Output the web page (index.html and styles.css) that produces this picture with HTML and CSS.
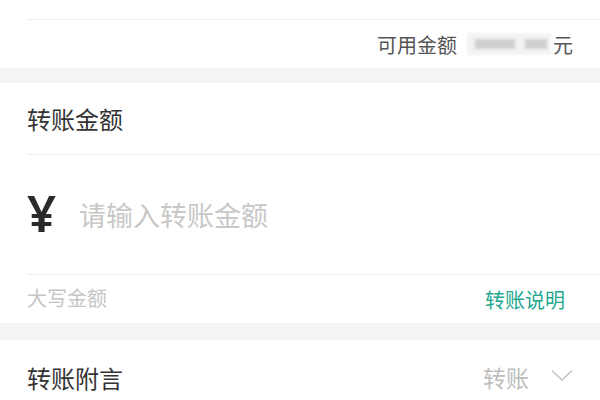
FILE: index.html
```html
<!DOCTYPE html>
<html lang="zh-CN">
<head>
<meta charset="utf-8">
<link rel="stylesheet" href="styles.css">
</head>
<body>
<div class="page">
  <section class="card">
    <div class="row top-row"></div>
    <div class="row balance-row">
      <span class="balance-label">可用金额</span>
      <span class="blur"><i class="b1"></i><i class="b2"></i></span>
      <span class="balance-unit">元</span>
    </div>
  </section>
  <div class="gap"></div>
  <section class="card">
    <div class="row title-row">转账金额</div>
    <div class="row amount-row">
      <span class="yen">¥</span>
      <span class="placeholder">请输入转账金额</span>
    </div>
    <div class="row caps-row">
      <span class="caps">大写金额</span>
      <span class="link">转账说明</span>
    </div>
  </section>
  <div class="gap gap2"></div>
  <section class="card">
    <div class="row memo-row">
      <span class="memo-label">转账附言</span>
      <span class="memo-value">转账</span>
      <svg class="chev" width="24" height="14" viewBox="0 0 24 14"><path d="M1 1.5 L12 12 L23 1.5" fill="none" stroke="#c4c4c4" stroke-width="1.6"/></svg>
    </div>
  </section>
</div>
</body>
</html>
```
FILE: styles.css
```css
html, body {
  margin: 0;
  padding: 0;
  background: #fff;
}
.page {
  width: 600px;
  height: 400px;
  overflow: hidden;
  font-family: "Noto Sans CJK SC", "Noto Sans", sans-serif;
  color: #333;
}
.card {
  background: #fff;
  padding-left: 27px;
}
.row {
  display: flex;
  align-items: center;
  padding-right: 27px;
}
.top-row {
  height: 19px;
  border-bottom: 1px solid #efefef;
}
.balance-row {
  height: 48px;
  justify-content: flex-end;
  font-size: 20px;
  color: #555;
}
.balance-label {
  margin-right: 2px;
}
.blur {
  display: inline-flex;
  align-items: center;
  width: 84px;
  height: 22px;
  margin: 0 2px 0 8px;
  background: #f3f3f3;
  filter: blur(1.5px);
  gap: 10px;
  justify-content: flex-end;
  padding-right: 4px;
  box-sizing: border-box;
}
.blur i {
  display: block;
  height: 10px;
  background: #d0d0d0;
}
.b1 { width: 40px; background: #d6d6d6; }
.b2 { width: 22px; }
.gap {
  height: 15px;
  background: #f4f4f5;
}
.gap2 {
  height: 17px;
}
.title-row {
  height: 71px;
  font-size: 24px;
  color: #333;
  border-bottom: 1px solid #efefef;
}
.amount-row {
  height: 119px;
  border-bottom: 1px solid #efefef;
}
.yen {
  font-family: "Noto Sans", sans-serif;
  font-size: 51px;
  font-weight: 600;
  color: #2a2a2a;
  width: 52px;
  line-height: 1;
  margin-top: -4px;
}
.placeholder {
  font-size: 27px;
  color: #c8c8c8;
  margin-top: 0;
}
.caps-row {
  height: 48px;
  justify-content: space-between;
}
.caps {
  font-size: 20px;
  color: #c4c4c4;
  margin-top: -4px;
}
.link {
  font-size: 20px;
  color: #22a78f;
  margin-right: 8px;
}
.memo-row {
  height: 74px;
}
.memo-label {
  font-size: 24px;
  color: #333;
  flex: 1;
}
.memo-value {
  font-size: 23px;
  color: #bdbdbd;
  margin-right: 22px;
}
.chev {
  display: block;
  width: 22px;
  height: 13px;
  margin-top: -4px;
}
```
